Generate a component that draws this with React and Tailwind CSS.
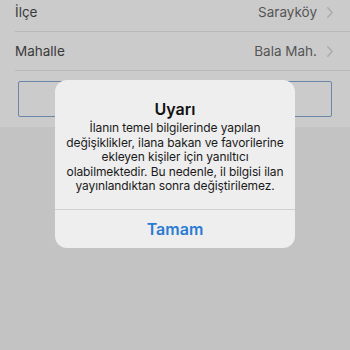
import React from 'react';

const Row = ({ label, value }) => (
  <div className="ml-[15px] h-[39px] border-b border-[#b9b9b9] flex items-center justify-between pr-[17px]">
    <span className="text-[13.5px] text-[#3a3a3a]">{label}</span>
    <div className="flex items-center gap-[10px]">
      <span className="text-[13.5px] text-[#555]">{value}</span>
      <svg width="6" height="11" viewBox="0 0 6 11" fill="none">
        <path d="M0.8 0.8l4.4 4.7-4.4 4.7" stroke="#a9a9a9" strokeWidth="1.3" strokeLinecap="round" strokeLinejoin="round" />
      </svg>
    </div>
  </div>
);

const lines = [
  'İlanın temel bilgilerinde yapılan',
  'değişiklikler, ilana bakan ve favorilerine',
  'ekleyen kişiler için yanıltıcı',
  'olabilmektedir. Bu nedenle, il bilgisi ilan',
  'yayınlandıktan sonra değiştirilemez.',
];

export default function App() {
  return (
    <div className="relative w-[350px] h-[350px] overflow-hidden bg-[#c3c3c3] font-['Inter',sans-serif]">
      <div className="bg-[#cbcbcb] pb-[10px]">
        <div className="-mt-[7px]">
          <Row label="İlçe" value="Sarayköy" />
          <Row label="Mahalle" value="Bala Mah." />
        </div>
        <div className="px-[18px] pt-[10px]">
          <div className="h-[36px] border border-[#6a86a8] rounded-[2px]" />
        </div>
      </div>

      {/* alert */}
      <div className="absolute inset-0 flex justify-center pt-[80px]">
        <div className="w-[240px] h-[168px] bg-[#eeeeee] rounded-[12px] flex flex-col">
          <div className="flex-1 flex flex-col items-center pt-[19px]">
            <div className="text-[16px] font-semibold text-[#111] leading-[20px]">Uyarı</div>
            <div className="text-[12px] text-[#1a1a1a] text-center leading-[14.5px] mt-[2px] tracking-[-0.1px]">
              {lines.map(l => (
                <div key={l} className="whitespace-nowrap">{l}</div>
              ))}
            </div>
          </div>
          <div className="h-[39px] border-t border-[#cfcfcf] flex items-center justify-center">
            <span className="text-[16px] font-semibold text-[#2b7bd3]">Tamam</span>
          </div>
        </div>
      </div>
    </div>
  );
}
